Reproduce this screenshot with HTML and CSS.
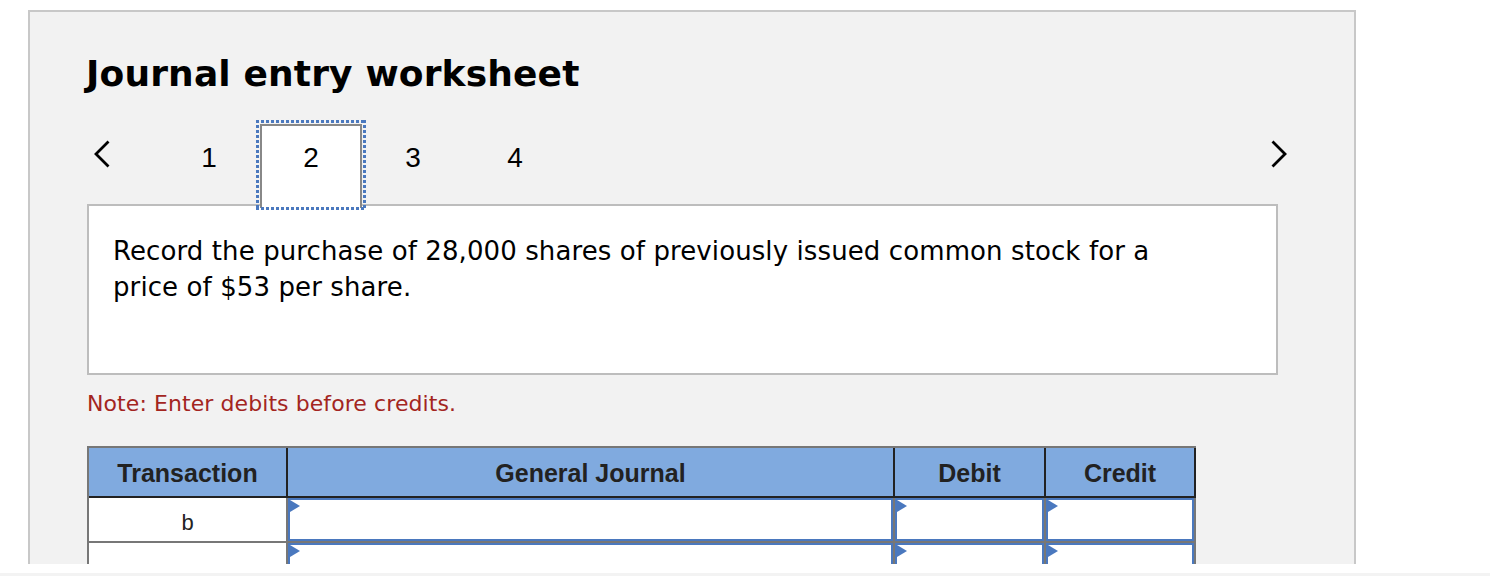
FILE: index.html
```html
<!DOCTYPE html>
<html lang="en">
<head>
<meta charset="utf-8">
<title>Journal entry worksheet</title>
<link rel="stylesheet" href="styles.css">
</head>
<body>
<div class="viewport">
  <section class="panel">
    <h1 class="title">Journal entry worksheet</h1>
    <nav class="steps">
      <button class="arrow arrow-prev" aria-label="Previous">
        <svg width="18" height="28" viewBox="0 0 18 28"><polyline points="15.5,1.5 3,14 15.5,26.5" fill="none" stroke="#000" stroke-width="2.8"/></svg>
      </button>
      <div class="tab">1</div>
      <div class="tab tab-active">2</div>
      <div class="tab">3</div>
      <div class="tab">4</div>
      <div class="spacer"></div>
      <button class="arrow arrow-next" aria-label="Next">
        <svg width="18" height="28" viewBox="0 0 18 28"><polyline points="2.5,1.5 15,14 2.5,26.5" fill="none" stroke="#000" stroke-width="2.8"/></svg>
      </button>
    </nav>
    <div class="question">
      <p>Record the purchase of 28,000 shares of previously issued common stock for a price of $53 per share.</p>
    </div>
    <p class="note">Note: Enter debits before credits.</p>
    <div class="jtable">
      <div class="jhead">
        <div class="hcell">Transaction</div>
        <div class="hcell">General Journal</div>
        <div class="hcell">Debit</div>
        <div class="hcell">Credit</div>
      </div>
      <div class="jrow">
        <div class="tcell">b</div>
        <div class="icell"></div>
        <div class="icell"></div>
        <div class="icell"></div>
      </div>
      <div class="jrow">
        <div class="tcell"></div>
        <div class="icell"></div>
        <div class="icell"></div>
        <div class="icell"></div>
      </div>
    </div>
  </section>
</div>
<div class="rule"></div>
</body>
</html>
```

FILE: styles.css
```css
* { box-sizing: border-box; }
html, body { margin: 0; padding: 0; background: #fff; }
body { font-family: "DejaVu Sans", Verdana, sans-serif; color: #000; }

.viewport {
  height: 564px;
  overflow: hidden;
  padding: 10px 0 0 28px;
}

.panel {
  width: 1328px;
  min-height: 700px;
  background: #f2f2f2;
  border: 2px solid #c8c8c8;
  padding: 0 76px 0 57px;
}

.title {
  margin: 41px 0 0 -1px;
  font-family: "DejaVu Sans", Tahoma, sans-serif;
  font-weight: bold;
  font-size: 36px;
  line-height: 42px;
  letter-spacing: 0.15px;
  color: #000;
}

.steps {
  display: flex;
  align-items: flex-start;
  margin-top: 29px;
  height: 80px;
}

.arrow {
  background: none;
  border: 0;
  padding: 0;
  margin: 16px 0 0 0;
  width: 18px;
  height: 28px;
  display: block;
}
.arrow svg { display: block; }
.arrow-prev { margin-left: 6px; margin-right: 47px; }
.arrow-next { margin-right: -10px; }
.spacer { flex: 1; }

.tab {
  width: 102px;
  height: 84px;
  padding-top: 14px;
  text-align: center;
  font-family: "Liberation Sans", Arial, sans-serif;
  font-size: 28px;
  line-height: 40px;
  color: #000;
  position: relative;
  z-index: 1;
}
.tab-active {
  background: #fff;
  border: 2px solid #888;
  border-bottom: 0;
  padding-top: 12px;
}
.tab-active::after {
  content: "";
  position: absolute;
  top: -6px;
  left: -6px;
  right: -6px;
  bottom: -2px;
  pointer-events: none;
  background:
    repeating-linear-gradient(to right, #4a78be 0 3px, transparent 3px 5px) top left / 100% 3px no-repeat,
    repeating-linear-gradient(to right, #4a78be 0 3px, transparent 3px 5px) bottom left / 100% 3px no-repeat,
    repeating-linear-gradient(to bottom, #4a78be 0 3px, transparent 3px 5px) top left / 3px 100% no-repeat,
    repeating-linear-gradient(to bottom, #4a78be 0 3px, transparent 3px 5px) top right / 3px 100% no-repeat;
}

.question {
  background: #fff;
  border: 2px solid #bdbdbd;
  height: 171px;
  padding: 27px 100px 0 24px;
}
.question p {
  margin: 0;
  font-size: 26px;
  line-height: 36px;
  letter-spacing: 0.1px;
}

.note {
  margin: 16px 0 0 0;
  font-size: 22px;
  line-height: 26px;
  letter-spacing: 0.08px;
  color: #a3251f;
}

.jtable {
  margin-top: 29px;
  width: 1109px;
  border-top: 2px solid #777;
  border-left: 2px solid #777;
  font-family: "Liberation Sans", Arial, sans-serif;
}

.jhead {
  display: grid;
  grid-template-columns: 197px 605px 149px 148px;
  column-gap: 2px;
  background: #222;
  border-right: 2px solid #222;
  border-bottom: 2px solid #222;
}
.hcell {
  height: 48px;
  padding-top: 2px;
  background: #80aadf;
  display: flex;
  align-items: center;
  justify-content: center;
  font-weight: bold;
  font-size: 25px;
  color: #222;
}

.jrow {
  display: grid;
  grid-template-columns: 197px 605px 149px 148px;
  column-gap: 2px;
  background: #777;
  border-right: 2px solid #777;
  border-bottom: 2px solid #777;
}
.tcell {
  height: 43px;
  background: #fff;
  text-align: center;
  font-size: 22px;
  line-height: 43px;
  padding-top: 3px;
  color: #222;
}
.icell {
  height: 43px;
  background: #fff;
  border: 2px solid #4a78be;
  position: relative;
}
.icell::before {
  content: "";
  position: absolute;
  top: 0;
  left: 0;
  border-left: 10px solid #4a78be;
  border-top: 6.5px solid transparent;
  border-bottom: 6.5px solid transparent;
}

.rule {
  margin-top: 9px;
  height: 3px;
  background: #f3f3f3;
}
```
